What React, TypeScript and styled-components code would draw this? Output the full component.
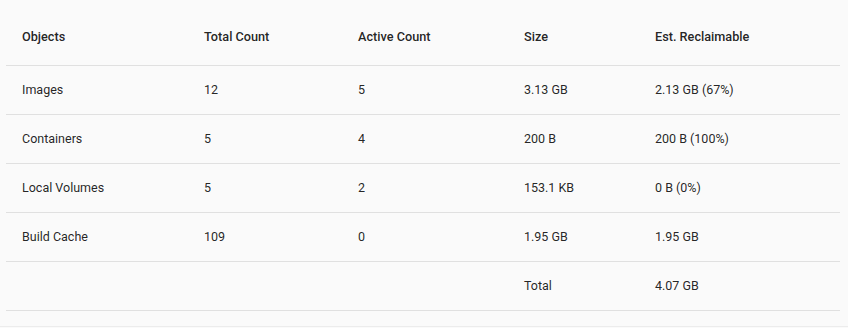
import React from "react";
import styled, { createGlobalStyle } from "styled-components";

const GlobalStyle = createGlobalStyle`
  html, body {
    margin: 0;
    padding: 0;
    background: #fafafa;
    font-family: Roboto, "Liberation Sans", sans-serif;
  }
`;

const Page = styled.div`
  height: 327px;
  padding: 9px 8px 0 6px;
  box-sizing: border-box;
  background: #fafafa;
  border-bottom: 1px solid #ececec;
`;

const Table = styled.table`
  width: 834px;
  border-collapse: collapse;
  table-layout: fixed;
`;

const HeadCell = styled.th<{ $w: number }>`
  box-sizing: border-box;
  width: ${({ $w }) => $w}px;
  height: 56px;
  padding: 0 16px;
  text-align: left;
  font-size: 12.7px;
  font-weight: 500;
  color: rgba(0, 0, 0, 0.87);
  border-bottom: 1px solid #e0e0e0;
`;

const Cell = styled.td`
  box-sizing: border-box;
  height: 49px;
  padding: 0 16px;
  font-size: 12.5px;
  font-weight: 400;
  color: rgba(0, 0, 0, 0.87);
  border-bottom: 1px solid #e0e0e0;
  white-space: nowrap;
`;

const columns = [
  { label: "Objects", width: 182 },
  { label: "Total Count", width: 154 },
  { label: "Active Count", width: 166 },
  { label: "Size", width: 131 },
  { label: "Est. Reclaimable", width: 201 },
];

const rows = [
  ["Images", "12", "5", "3.13 GB", "2.13 GB (67%)"],
  ["Containers", "5", "4", "200 B", "200 B (100%)"],
  ["Local Volumes", "5", "2", "153.1 KB", "0 B (0%)"],
  ["Build Cache", "109", "0", "1.95 GB", "1.95 GB"],
  ["", "", "", "Total", "4.07 GB"],
];

export default function App() {
  return (
    <>
      <GlobalStyle />
      <Page>
        <Table>
          <thead>
            <tr>
              {columns.map((c) => (
                <HeadCell key={c.label} $w={c.width}>
                  {c.label}
                </HeadCell>
              ))}
            </tr>
          </thead>
          <tbody>
            {rows.map((r, i) => (
              <tr key={i}>
                {r.map((v, j) => (
                  <Cell key={j}>{v}</Cell>
                ))}
              </tr>
            ))}
          </tbody>
        </Table>
      </Page>
    </>
  );
}
